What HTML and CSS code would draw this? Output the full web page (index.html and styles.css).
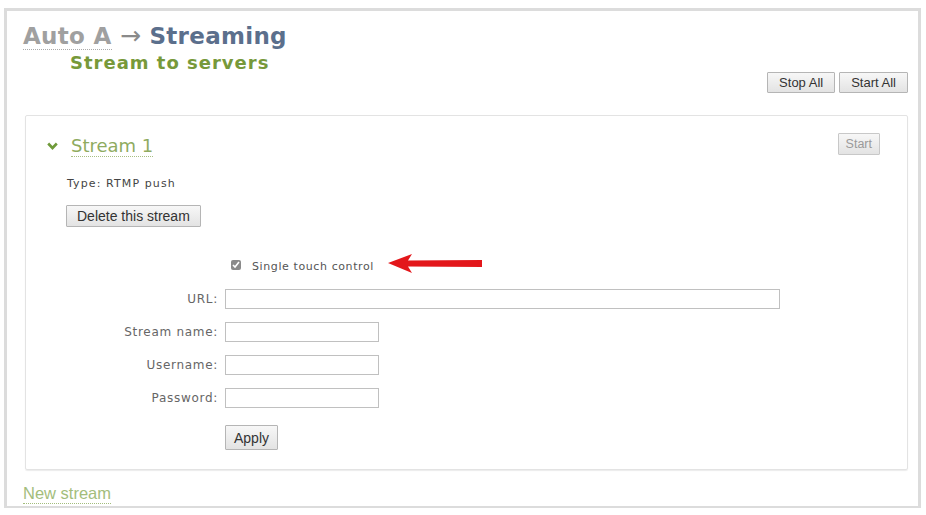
FILE: index.html
```html
<!DOCTYPE html>
<html>
<head>
  <title>Auto A - Streaming</title>
  <link rel="stylesheet" href="styles.css">
</head>
<body>
  <div class="frame">
    <h1 class="crumbs"><span class="crumb-link">Auto A</span> <span class="arrow">&rarr;</span> <span class="crumb-current">Streaming</span></h1>

    <div class="section-head">
      <h2>Stream to servers</h2>
      <div class="btn-row">
        <button class="btn">Stop All</button>
        <button class="btn">Start All</button>
      </div>
    </div>

    <div class="stream">
      <div class="stream-head">
        <div class="stream-title">
          <svg class="chev" width="11" height="8" viewBox="0 0 11 8"><path d="M1.2 1.5 L5.5 6 L9.8 1.5" fill="none" stroke="#6f9a3a" stroke-width="2.6"/></svg>
          <span class="stream-name">Stream 1</span>
        </div>
        <button class="btn btn-start">Start</button>
      </div>

      <div class="type">Type: RTMP push</div>
      <button class="btn btn-delete">Delete this stream</button>

      <div class="form">
        <div class="check-row">
          <input type="checkbox" checked>
          <span class="check-label">Single touch control</span>
          <svg class="red-arrow" width="95" height="22" viewBox="0 0 95 22"><path d="M0 10 L24 1 L20 7.5 L94 7 L94 14 L20 13.5 L24 20 Z" fill="#e3171b"/></svg>
        </div>
        <div class="row"><label>URL:</label><input type="text" class="wide"></div>
        <div class="row"><label>Stream name:</label><input type="text"></div>
        <div class="row"><label>Username:</label><input type="text"></div>
        <div class="row"><label>Password:</label><input type="text"></div>
        <div class="row row-apply"><label></label><button class="btn btn-apply">Apply</button></div>
      </div>
    </div>

    <a class="new-stream">New stream</a>
  </div>
</body>
</html>
```

FILE: styles.css
```css
body {
  margin: 0;
  background: #fff;
  font-family: "DejaVu Sans", Verdana, sans-serif;
}

.frame {
  margin: 8px 5px 2px 4px;
  border: 3px solid #dcdcdc;
  border-bottom-width: 2px;
  height: 500px;
  box-sizing: border-box;
  padding: 0 10px 0 15px;
}

.crumbs {
  margin: 11px 0 0 1px;
  font-size: 23px;
  font-weight: bold;
  letter-spacing: 0.3px;
  line-height: 28px;
}

.crumb-link {
  color: #a0a0a0;
  border-bottom: 1px dotted #aaa;
}

.arrow {
  color: #8a8a8a;
  font-weight: normal;
  font-size: 25px;
}

.crumb-current {
  color: #5b6f8c;
}

.section-head {
  display: flex;
  justify-content: space-between;
  align-items: flex-start;
  margin-top: 2px;
  height: 42px;
}

.section-head h2 {
  margin: 0 0 0 48px;
  font-size: 18px;
  letter-spacing: 1px;
  color: #77993a;
  line-height: 22px;
}

.btn-row {
  display: flex;
  gap: 4px;
  margin-top: 20px;
}

.btn {
  font-family: "Liberation Sans", Arial, sans-serif;
  font-size: 13px;
  color: #333;
  background: linear-gradient(#f7f7f7, #e3e3e3);
  border: 1px solid #b5b5b5;
  border-radius: 1px;
  padding: 0 11px;
  height: 21px;
}

.btn-start {
  font-size: 12.5px;
  color: #9a9a9a;
  border-color: #c8c8c8;
  height: 22px;
  padding: 0 7px;
  margin-top: -3px;
}

.stream {
  margin: 21px 0 0 3px;
  border: 1px solid #e3e3e3;
  border-radius: 2px;
  height: 355px;
  box-sizing: border-box;
  padding: 17px 27px 0 21px;
  box-shadow: 0 1px 1px #ececec;
}

.stream-head {
  display: flex;
  justify-content: space-between;
  align-items: center;
  height: 24px;
}

.stream-title {
  display: flex;
  align-items: center;
  gap: 13px;
  padding-top: 2px;
}

.stream-name {
  font-size: 18px;
  color: #8fab5f;
  border-bottom: 1px dotted #a8bf84;
  line-height: 20px;
}

.type {
  margin: 20px 0 0 20px;
  font-size: 11px;
  letter-spacing: 1.1px;
  line-height: 14px;
  color: #444;
}

.btn-delete {
  margin: 14px 0 0 19px;
  font-size: 14px;
  height: 22px;
  padding: 0 10px;
}

.form {
  margin-top: 27px;
}

.check-row {
  display: flex;
  align-items: center;
  margin-left: 184px;
  height: 22px;
}

.check-row input {
  margin: 0 11px 0 0;
  width: 10px;
  height: 10px;
  accent-color: #8a8a8a;
}

.check-label {
  font-size: 11px;
  letter-spacing: 0.6px;
  color: #555;
  padding-top: 3px;
}

.red-arrow {
  margin-left: 14px;
  margin-top: -3px;
}

.row {
  display: flex;
  align-items: center;
  margin-top: 13px;
}

.row label {
  width: 171px;
  text-align: right;
  font-size: 12px;
  letter-spacing: 0.7px;
  color: #666;
  margin-right: 7px;
}

.row input {
  width: 154px;
  height: 20px;
  box-sizing: border-box;
  border: 1px solid #c0c0c0;
  margin: 0;
}

.row input.wide {
  width: 555px;
}

.row-apply {
  margin-top: 17px;
}

.btn-apply {
  font-size: 14px;
  height: 25px;
  padding: 0 8px;
}

.new-stream {
  display: inline-block;
  margin: 14px 0 0 1px;
  font-family: "Liberation Sans", Arial, sans-serif;
  font-size: 16.5px;
  line-height: 19px;
  color: #a3bd7c;
  border-bottom: 1px dotted #a3bd7c;
}
```
